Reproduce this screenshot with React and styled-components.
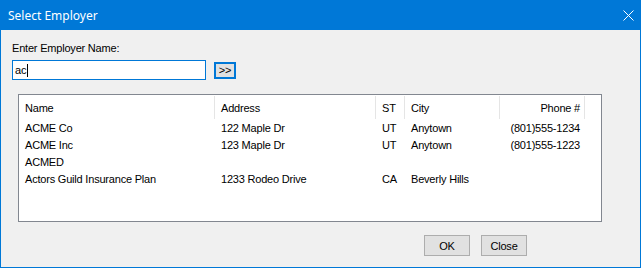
import React from 'react';
import styled, { createGlobalStyle } from 'styled-components';

const Global = createGlobalStyle`
  body { margin: 0; background: #fff; }
  * { box-sizing: border-box; }
`;

const Window = styled.div`
  width: 641px;
  height: 268px;
  border: 1px solid #0078d7;
  border-top: 0;
  background: #f0f0f0;
  display: flex;
  flex-direction: column;
  font-family: "Liberation Sans", Arial, sans-serif;
  font-size: 11px;
  letter-spacing: -0.2px;
  color: #000;
`;

const TitleBar = styled.div`
  height: 30px;
  background: #0078d7;
  display: flex;
  align-items: center;
  justify-content: space-between;
  padding: 0 7px 0 8px;
  margin: 0 -1px;
  color: #fff;
  font-family: "Noto Sans", "Open Sans", sans-serif;
  font-size: 12px;
  letter-spacing: 0;
`;

const CloseIcon = () => (
  <svg width="11" height="11" viewBox="0 0 11 11">
    <path d="M0.5 0.5 L10.5 10.5 M10.5 0.5 L0.5 10.5" stroke="#fff" strokeWidth="1" fill="none" />
  </svg>
);

const Body = styled.div`
  flex: 1;
  display: flex;
  flex-direction: column;
  padding: 12px 11px 0 11px;
`;

const Label = styled.div`
  line-height: 13px;
`;

const InputRow = styled.div`
  display: flex;
  align-items: center;
  margin-top: 5px;
`;

const TextBox = styled.div`
  width: 194px;
  height: 20px;
  border: 1px solid #0078d7;
  background: #fff;
  display: flex;
  align-items: center;
  padding: 0 2px;
  line-height: 13px;
`;

const Caret = styled.span`
  display: inline-block;
  width: 1px;
  height: 13px;
  background: #000;
  margin-left: 1px;
`;

const GoButton = styled.div`
  width: 22px;
  height: 17px;
  margin-left: 8px;
  border: 2px solid #0078d7;
  background: #e1e1e1;
  display: flex;
  align-items: center;
  justify-content: center;
  line-height: 13px;
`;

const List = styled.div`
  margin: 14px 0 0 6px;
  width: 584px;
  height: 128px;
  border: 1px solid #828790;
  background: #fff;
`;

const cols = '196px 161px 29px 95px 85px';

const HeaderRow = styled.div`
  display: grid;
  grid-template-columns: ${cols};
  height: 24px;
`;

const HeaderCell = styled.div`
  border-right: 1px solid #e5e5e5;
  margin-top: 1px;
  padding: 6px ${p => (p.$right ? '4px' : '6px')} 0 6px;
  line-height: 13px;
  text-align: ${p => (p.$right ? 'right' : 'left')};
`;

const Rows = styled.div`
  margin-top: 1px;
`;

const Row = styled.div`
  display: grid;
  grid-template-columns: ${cols};
  height: 17px;
  line-height: 17px;
`;

const Cell = styled.div`
  padding: 0 ${p => (p.$right ? '5px' : '6px')} 0 6px;
  text-align: ${p => (p.$right ? 'right' : 'left')};
  white-space: nowrap;
  overflow: hidden;
`;

const ButtonRow = styled.div`
  display: flex;
  gap: 11px;
  margin-top: 13px;
  padding-left: 412px;
`;

const DlgButton = styled.div`
  width: 46px;
  height: 21px;
  border: 1px solid #adadad;
  background: #e1e1e1;
  display: flex;
  align-items: center;
  justify-content: center;
`;

const employers = [
  { name: 'ACME Co', addr: '122 Maple Dr', st: 'UT', city: 'Anytown', phone: '(801)555-1234' },
  { name: 'ACME Inc', addr: '123 Maple Dr', st: 'UT', city: 'Anytown', phone: '(801)555-1223' },
  { name: 'ACMED', addr: '', st: '', city: '', phone: '' },
  { name: 'Actors Guild Insurance Plan', addr: '1233 Rodeo Drive', st: 'CA', city: 'Beverly Hills', phone: '' },
];

export default function App() {
  return (
    <>
      <Global />
      <Window>
        <TitleBar>
          <span>Select Employer</span>
          <CloseIcon />
        </TitleBar>
        <Body>
          <Label>Enter Employer Name:</Label>
          <InputRow>
            <TextBox>ac<Caret /></TextBox>
            <GoButton>&gt;&gt;</GoButton>
          </InputRow>
          <List>
            <HeaderRow>
              <HeaderCell>Name</HeaderCell>
              <HeaderCell>Address</HeaderCell>
              <HeaderCell>ST</HeaderCell>
              <HeaderCell>City</HeaderCell>
              <HeaderCell $right>Phone #</HeaderCell>
            </HeaderRow>
            <Rows>
              {employers.map(e => (
                <Row key={e.name}>
                  <Cell>{e.name}</Cell>
                  <Cell>{e.addr}</Cell>
                  <Cell>{e.st}</Cell>
                  <Cell>{e.city}</Cell>
                  <Cell $right>{e.phone}</Cell>
                </Row>
              ))}
            </Rows>
          </List>
          <ButtonRow>
            <DlgButton>OK</DlgButton>
            <DlgButton>Close</DlgButton>
          </ButtonRow>
        </Body>
      </Window>
    </>
  );
}
